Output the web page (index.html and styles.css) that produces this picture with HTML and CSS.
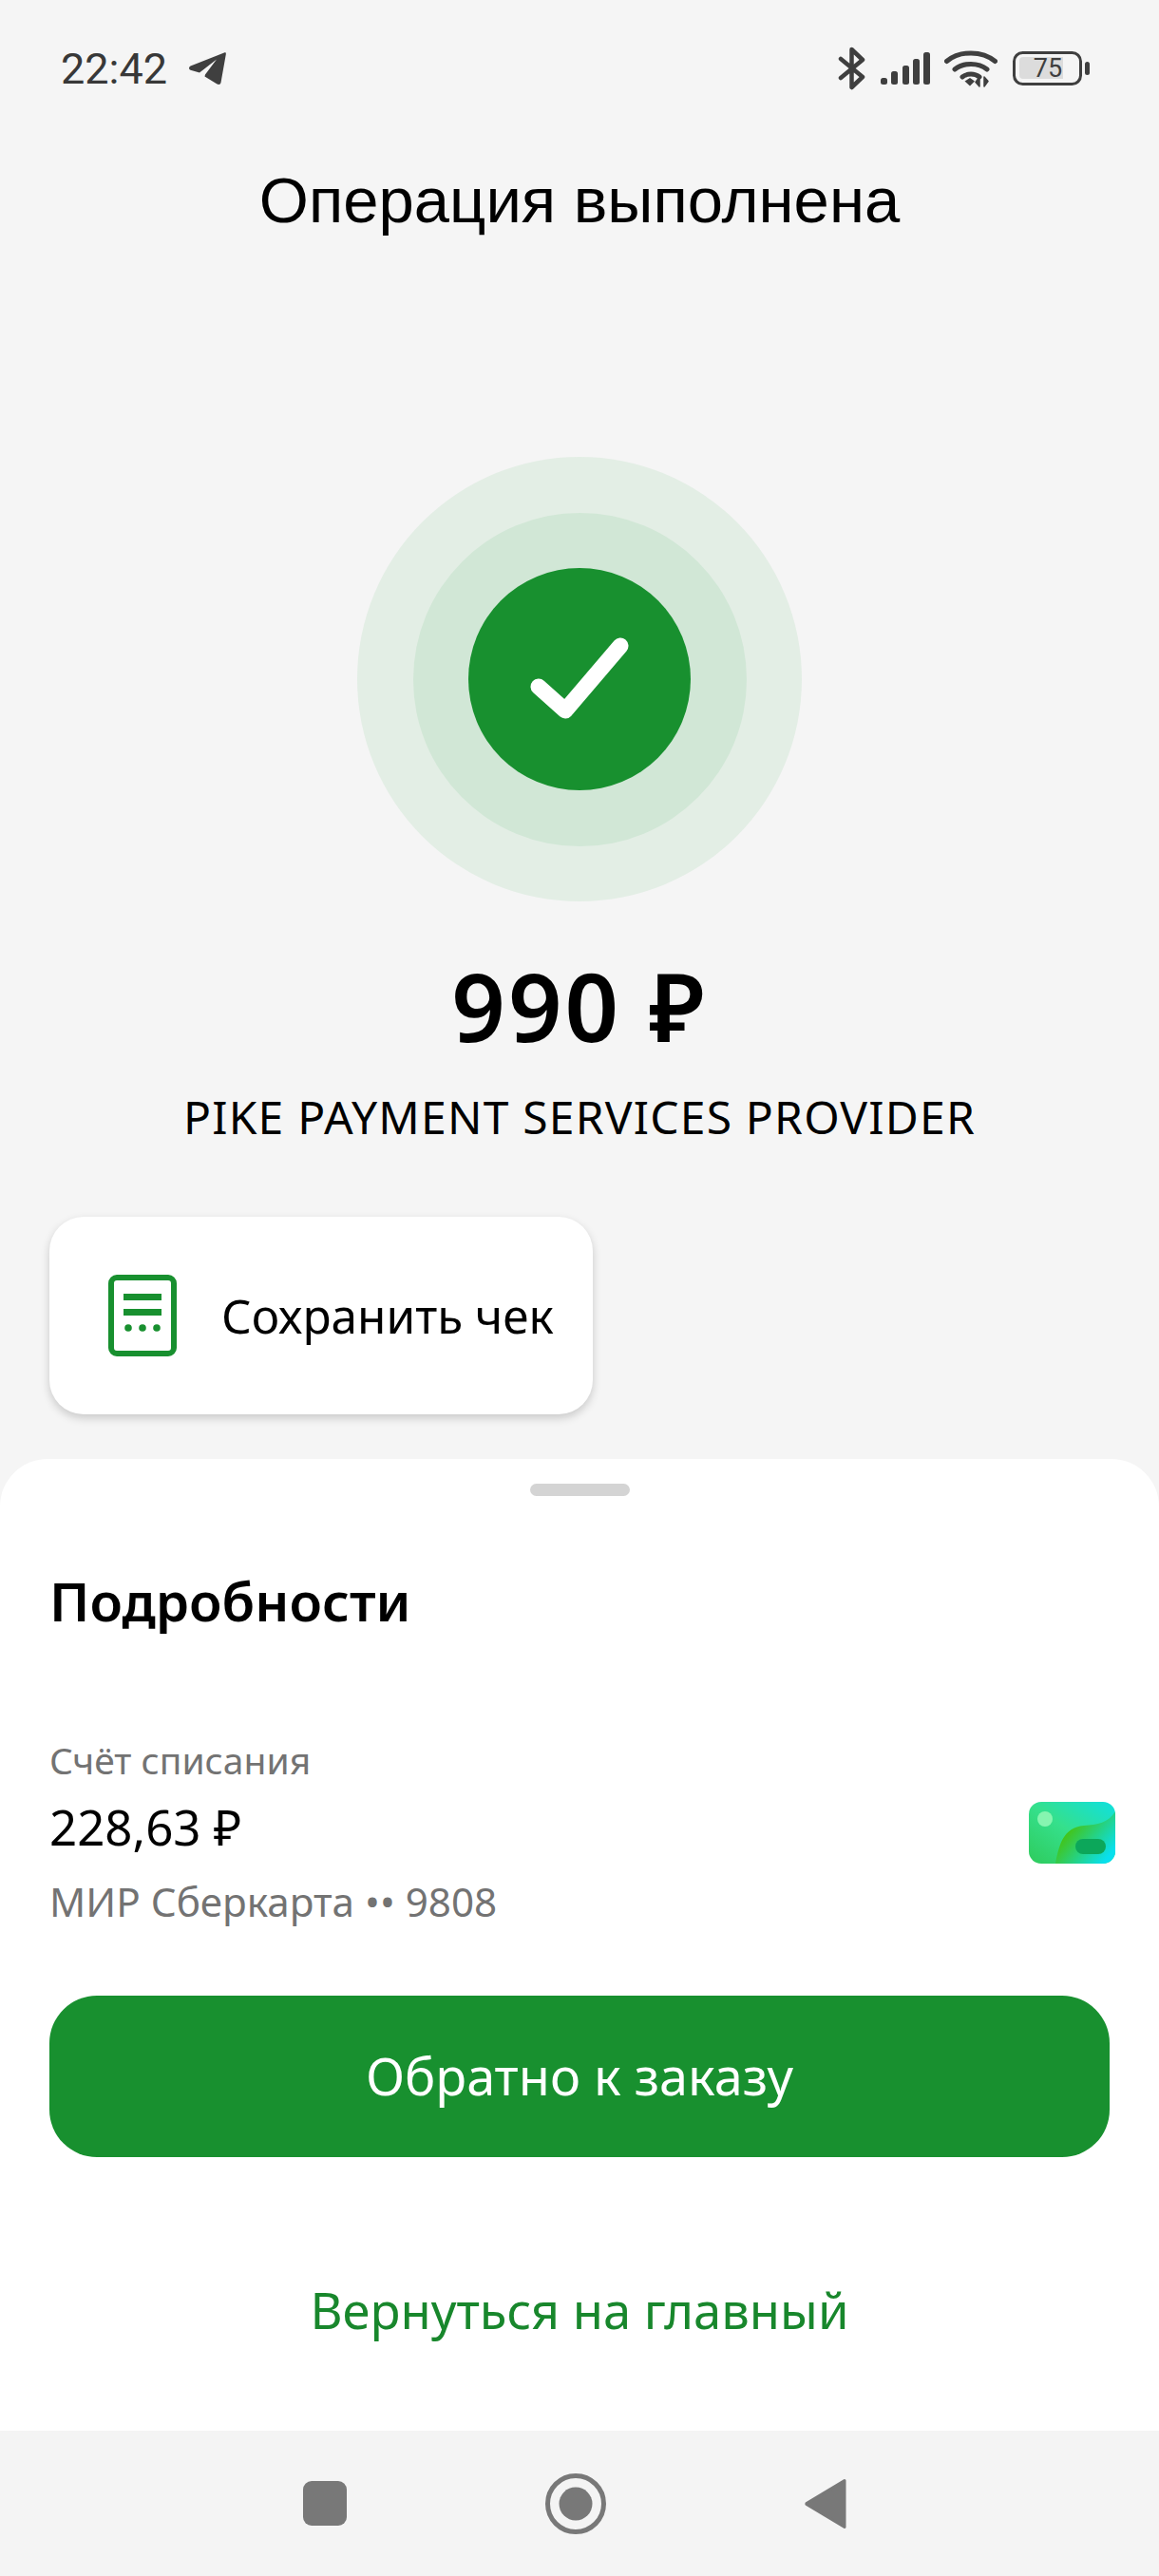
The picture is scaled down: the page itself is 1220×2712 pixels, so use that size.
FILE: index.html
```html
<!DOCTYPE html>
<html lang="ru">
<head>
    <meta charset="UTF-8">
    <meta name="viewport" content="width=device-width, initial-scale=1.0">
    <title>Операция выполнена</title>
    <link rel="stylesheet" href="styles.css">
</head>
<body>
    <main class="result">
        <div class="status-bar">
            <div class="status-left">
                <span class="clock">22:42</span>
                <svg class="tg-icon" viewBox="0 0 40 36"><path d="M38 1.500 2.500 15.500C.5 16.500 .5 19 2.500 19.800L12 22.500 30 8.500 18 24.500 17.500 26.500 30.500 34.500C32.500 35.500 34 35 34.500 33L39.800 3.200C40 1.500 39.500 1 38 1.500Z"/></svg>
            </div>
            <div class="status-right">
                <svg class="bt-icon" viewBox="0 0 30 46"><path d="M3 13 26 32 14.500 43V3L26 14 3 33" fill="none" stroke="#3f3f3f" stroke-width="4.500" stroke-linecap="round" stroke-linejoin="round"/></svg>
                <svg class="signal-icon" viewBox="0 0 52 34"><rect x="0" y="27" width="7" height="7" rx="2.500"/><rect x="11" y="20" width="7" height="14" rx="2.500"/><rect x="23" y="14" width="7" height="20" rx="2.500"/><rect x="34" y="7" width="7" height="27" rx="2.500"/><rect x="45" y="0" width="7" height="34" rx="2.500"/></svg>
                <svg class="wifi-icon" viewBox="0 0 56 40"><path d="M2.500 12.500C16 1 40 1 53.500 12.500M11 21C20 13.500 36 13.500 45 21M19 29C24 25 32 25 37 29" fill="none" stroke="#3f3f3f" stroke-width="5" stroke-linecap="round"/><path d="M21.500 33.500 27 30 32 33.500 27 38.500Z"/><path d="M37 29v10l-4-4.500ZM42 39V29l4 4.500Z" stroke="#3f3f3f" stroke-width="1.500" stroke-linejoin="round"/></svg>
                <svg class="battery-icon" viewBox="0 0 82 36"><rect x="1.500" y="1.500" width="70" height="33" rx="9" fill="none" stroke="#3f3f3f" stroke-width="3"/><path d="M11 6h42v23H11a4 4 0 0 1-4-4V10a4 4 0 0 1 4-4Z" fill="#dcdcdc"/><text x="37" y="27" class="battery-text">75</text><rect x="76" y="11" width="5" height="14" rx="2.500"/></svg>
            </div>
        </div>

        <h1 class="title">Операция выполнена</h1>

        <div class="ring-outer">
            <div class="ring-middle">
                <div class="ring-inner">
                    <svg class="check-icon" viewBox="0 0 104 88"><path d="M9 52 37 77 95 9" fill="none" stroke="#fff" stroke-width="17" stroke-linecap="round" stroke-linejoin="round"/></svg>
                </div>
            </div>
        </div>

        <div class="amount">990 ₽</div>
        <div class="merchant">PIKE PAYMENT SERVICES PROVIDER</div>

        <div class="receipt-row">
            <div class="receipt-btn">
                <svg class="receipt-icon" viewBox="0 0 72 86"><rect x="3" y="3" width="66" height="80" rx="6" fill="none" stroke="#18902f" stroke-width="6"/><rect x="16" y="20" width="40" height="7" fill="#18902f"/><rect x="16" y="36" width="40" height="7" fill="#18902f"/><circle cx="21" cy="56" r="3.800" fill="#18902f"/><circle cx="36" cy="56" r="3.800" fill="#18902f"/><circle cx="51" cy="56" r="3.800" fill="#18902f"/></svg>
                <span>Сохранить чек</span>
            </div>
        </div>
    </main>

    <section class="sheet">
        <div class="handle"></div>
        <h2 class="sheet-title">Подробности</h2>
        <div class="account">
            <div class="account-info">
                <div class="account-label">Счёт списания</div>
                <div class="account-sum">228,63 ₽</div>
                <div class="account-card">МИР Сберкарта •• 9808</div>
            </div>
            <svg class="card-icon" viewBox="0 0 91 65">
                <defs>
                    <linearGradient id="cardBase" x1="0" y1="1" x2="1" y2="0">
                        <stop offset="0" stop-color="#2ecb5c"/>
                        <stop offset="0.5" stop-color="#35e08c"/>
                        <stop offset="1" stop-color="#0fe0e0"/>
                    </linearGradient>
                    <linearGradient id="cardWave" x1="0" y1="0" x2="1" y2="0.700">
                        <stop offset="0.300" stop-color="#45c312"/>
                        <stop offset="1" stop-color="#08e0ee"/>
                    </linearGradient>
                    <clipPath id="cardClip"><rect width="91" height="65" rx="13"/></clipPath>
                </defs>
                <g clip-path="url(#cardClip)">
                    <rect width="91" height="65" fill="url(#cardBase)"/>
                    <path d="M28 65C32 45 36 27 58 25 72 24 84 22 91 10V65Z" fill="url(#cardWave)"/>
                    <circle cx="17" cy="18" r="8" fill="#86f5b0"/>
                    <rect x="49" y="39" width="32" height="16" rx="8" fill="#0ca75a"/>
                </g>
            </svg>
        </div>
        <button class="primary-btn">Обратно к заказу</button>
        <a class="home-link">Вернуться на главный</a>
    </section>

    <nav class="nav-bar">
        <svg class="nav-square" viewBox="0 0 46 47"><rect width="46" height="47" rx="9"/></svg>
        <svg class="nav-home" viewBox="0 0 64 64"><circle cx="32" cy="32" r="29.500" fill="none" stroke="#787878" stroke-width="5"/><circle cx="32" cy="32" r="17.500"/></svg>
        <svg class="nav-back" viewBox="0 0 44 54"><path d="M42 2.500 2 26.500a1 1 0 0 0 0 1L42 51.500Z" stroke="#787878" stroke-width="3" stroke-linejoin="round"/></svg>
    </nav>
</body>
</html>
```

FILE: styles.css
```css
* {
    box-sizing: border-box;
}
html, body {
    margin: 0;
    padding: 0;
}
body {
    width: 1220px;
    height: 2712px;
    display: flex;
    flex-direction: column;
    background-color: #f5f5f5;
    font-family: "Noto Sans", Roboto, sans-serif;
    color: #000;
    overflow: hidden;
}
.result {
    height: 1536px;
    display: flex;
    flex-direction: column;
    align-items: center;
}

/* status bar */
.status-bar {
    width: 100%;
    height: 144px;
    padding: 0 72px 0 64px;
    display: flex;
    justify-content: space-between;
    align-items: center;
    fill: #3f3f3f;
}
.status-left {
    display: flex;
    align-items: center;
    gap: 22px;
}
.clock {
    font-family: Roboto, sans-serif;
    font-size: 45px;
    color: #383838;
}
.tg-icon {
    width: 40px;
    height: 36px;
}
.status-right {
    display: flex;
    align-items: center;
}
.bt-icon {
    width: 30px;
    height: 46px;
    margin-right: 15px;
}
.signal-icon {
    width: 52px;
    height: 34px;
    margin-right: 15px;
}
.wifi-icon {
    width: 56px;
    height: 40px;
    margin-right: 16px;
}
.battery-icon {
    width: 82px;
    height: 36px;
}
.battery-text {
    font-family: Roboto, sans-serif;
    font-size: 27px;
    text-anchor: middle;
    fill: #3f3f3f;
}

.title {
    margin: 27px 0 0;
    font-family: "Liberation Sans", Arial, sans-serif;
    font-size: 67px;
    line-height: 80px;
    font-weight: 400;
}

/* success rings */
.ring-outer, .ring-middle, .ring-inner {
    border-radius: 50%;
    display: flex;
    justify-content: center;
    align-items: center;
}
.ring-outer {
    width: 468px;
    height: 468px;
    margin-top: 230px;
    background-color: #e3eee5;
}
.ring-middle {
    width: 351px;
    height: 351px;
    background-color: #d1e7d6;
}
.ring-inner {
    width: 234px;
    height: 234px;
    background-color: #18902f;
}
.check-icon {
    width: 104px;
    height: 88px;
}

.amount {
    margin-top: 60px;
    font-size: 99px;
    line-height: 100px;
    font-weight: 600;
    letter-spacing: 3px;
}
.merchant {
    margin-top: 37px;
    font-size: 48px;
    line-height: 60px;
    letter-spacing: 1.2px;
}

/* save receipt */
.receipt-row {
    width: 100%;
    margin-top: 75px;
    padding-left: 52px;
}
.receipt-btn {
    width: 572px;
    height: 208px;
    padding-left: 62px;
    display: flex;
    align-items: center;
    gap: 47px;
    background-color: #fff;
    border-radius: 36px;
    box-shadow: 0 4px 10px rgba(0,0,0,0.18);
    font-size: 49.500px;
}
.receipt-icon {
    width: 72px;
    height: 86px;
}

/* bottom sheet */
.sheet {
    height: 1023px;
    padding: 26px 52px 0;
    display: flex;
    flex-direction: column;
    background-color: #fff;
    border-radius: 50px 50px 0 0;
}
.handle {
    width: 105px;
    height: 13px;
    align-self: center;
    background-color: #d4d4d4;
    border-radius: 7px;
}
.sheet-title {
    margin: 81px 0 0;
    font-size: 56.500px;
    line-height: 60px;
    font-weight: 600;
}
.account {
    margin-top: 107px;
    display: flex;
    justify-content: space-between;
    align-items: center;
}
.account-label {
    font-size: 39px;
    line-height: 60px;
    color: #737373;
}
.account-sum {
    margin-top: 10px;
    font-size: 51px;
    line-height: 60px;
}
.account-card {
    margin-top: 19px;
    font-size: 42.200px;
    line-height: 60px;
    color: #737373;
}
.card-icon {
    width: 91px;
    height: 65px;
    margin: 4px -6px 0 0;
}
.primary-btn {
    height: 170px;
    margin-top: 69px;
    border: none;
    border-radius: 50px;
    background-color: #18902f;
    color: #fff;
    font-family: inherit;
    font-size: 54px;
    padding-bottom: 4px;
}
.home-link {
    margin-top: 131px;
    text-align: center;
    font-size: 52.500px;
    line-height: 60px;
    color: #18872c;
}

/* android nav */
.nav-bar {
    height: 153px;
    display: flex;
    align-items: center;
    background-color: #f4f4f4;
    fill: #787878;
    padding-left: 319px;
}
.nav-square {
    width: 46px;
    height: 47px;
    margin-right: 209px;
}
.nav-home {
    width: 64px;
    height: 64px;
    margin-right: 209px;
}
.nav-back {
    width: 44px;
    height: 54px;
}
```
